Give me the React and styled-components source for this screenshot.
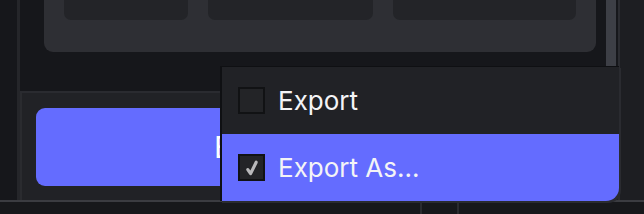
import styled, { createGlobalStyle } from "styled-components";

const GlobalStyle = createGlobalStyle`
    html, body {
        margin: 0;
        padding: 0;
        background: #16171b;
    }
    body {
        font-family: Inter, "Liberation Sans", sans-serif;
        overflow: hidden;
    }
`;

const Screen = styled.div`
    width: 644px;
    height: 214px;
    position: relative;
    display: flex;
    flex-direction: column;
    background: #16171b;
    overflow: hidden;
`;

const Main = styled.div`
    height: 200px;
    display: flex;
`;

const SideColumn = styled.div`
    width: 17px;
    background: #16171b;
`;

const Panel = styled.div`
    width: 598px;
    border-left: 3px solid #25262a;
    border-right: 2px solid #2b2c31;
    display: flex;
    flex-direction: column;
`;

const RightColumn = styled.div`
    flex: 1;
    background: #1d1e22;
`;

const ScrollArea = styled.div`
    height: 91px;
    display: flex;
    align-items: flex-start;
    padding-left: 24px;
    gap: 10px;
    background: #16171b;
    border-bottom: 2px solid #2a2b30;
`;

const Card = styled.div`
    width: 512px;
    padding: 0 20px 32px;
    display: flex;
    gap: 20px;
    background: #2e2f34;
    border-radius: 0 0 9px 9px;
`;

const Tile = styled.div`
    width: ${({ $w }) => $w}px;
    height: 20px;
    background: #232428;
    border-radius: 0 0 7px 7px;
`;

const Scrollbar = styled.div`
    width: 10px;
    height: 66px;
    background: #3d3f46;
`;

const ActionArea = styled.div`
    flex: 1;
    padding: 15px 16px 14px 14px;
    background: #212226;
    border-left: 2px solid #2a2b2f;
`;

const PrimaryButton = styled.div`
    height: 78px;
    display: flex;
    align-items: center;
    padding-left: 178px;
    background: #646cff;
    border-radius: 9px;
    color: #ffffff;
    font-size: 30px;
`;

const StatusBar = styled.div`
    flex: 1;
    display: flex;
    border-top: 2px solid #3b3c41;
    background: #17181b;
`;

const StatusCell = styled.div`
    width: ${({ $w }) => $w}px;
    border-right: 2px solid #2a2b2f;
`;

const Menu = styled.div`
    position: absolute;
    left: 220px;
    top: 66px;
    width: 397px;
    border-left: 2px solid #0f1013;
    border-top: 1px solid #0f1013;
    background: #212226;
    border-radius: 0 0 13px 0;
    overflow: hidden;
    box-shadow: 2px 2px 0 #2a2b30;
`;

const MenuItem = styled.div`
    height: 67px;
    display: flex;
    align-items: center;
    gap: 13px;
    padding-left: 16px;
    background: ${({ $active }) => ($active ? "#646cff" : "transparent")};
    color: #f4f4f6;
    font-size: 26px;
`;

const CheckBox = styled.div`
    width: 23px;
    height: 23px;
    border: 2px solid #111214;
    background: #232427;
    display: flex;
    align-items: center;
    justify-content: center;
`;

function Check() {
    return (
        <svg width="14" height="16" viewBox="0 0 14 16">
            <path d="M2.8 9.6 L5.6 13.6 L11.2 2.2" fill="none" stroke="#b9b9bb" strokeWidth="3.2" strokeLinecap="round" strokeLinejoin="round" />
        </svg>
    );
}

const items = [
    { label: "Export", checked: false },
    { label: "Export As...", checked: true },
];

export default function App() {
    return (
        <>
            <GlobalStyle />
            <Screen>
                <Main>
                    <SideColumn />
                    <Panel>
                        <ScrollArea>
                            <Card>
                                <Tile $w={124} />
                                <Tile $w={165} />
                                <Tile $w={183} />
                            </Card>
                            <Scrollbar />
                        </ScrollArea>
                        <ActionArea>
                            <PrimaryButton>Export</PrimaryButton>
                        </ActionArea>
                    </Panel>
                    <RightColumn />
                </Main>
                <StatusBar>
                    <StatusCell $w={420} />
                    <StatusCell $w={35} />
                </StatusBar>
                <Menu>
                    {items.map((item) => (
                        <MenuItem key={item.label} $active={item.checked}>
                            <CheckBox>{item.checked && <Check />}</CheckBox>
                            {item.label}
                        </MenuItem>
                    ))}
                </Menu>
            </Screen>
        </>
    );
}
